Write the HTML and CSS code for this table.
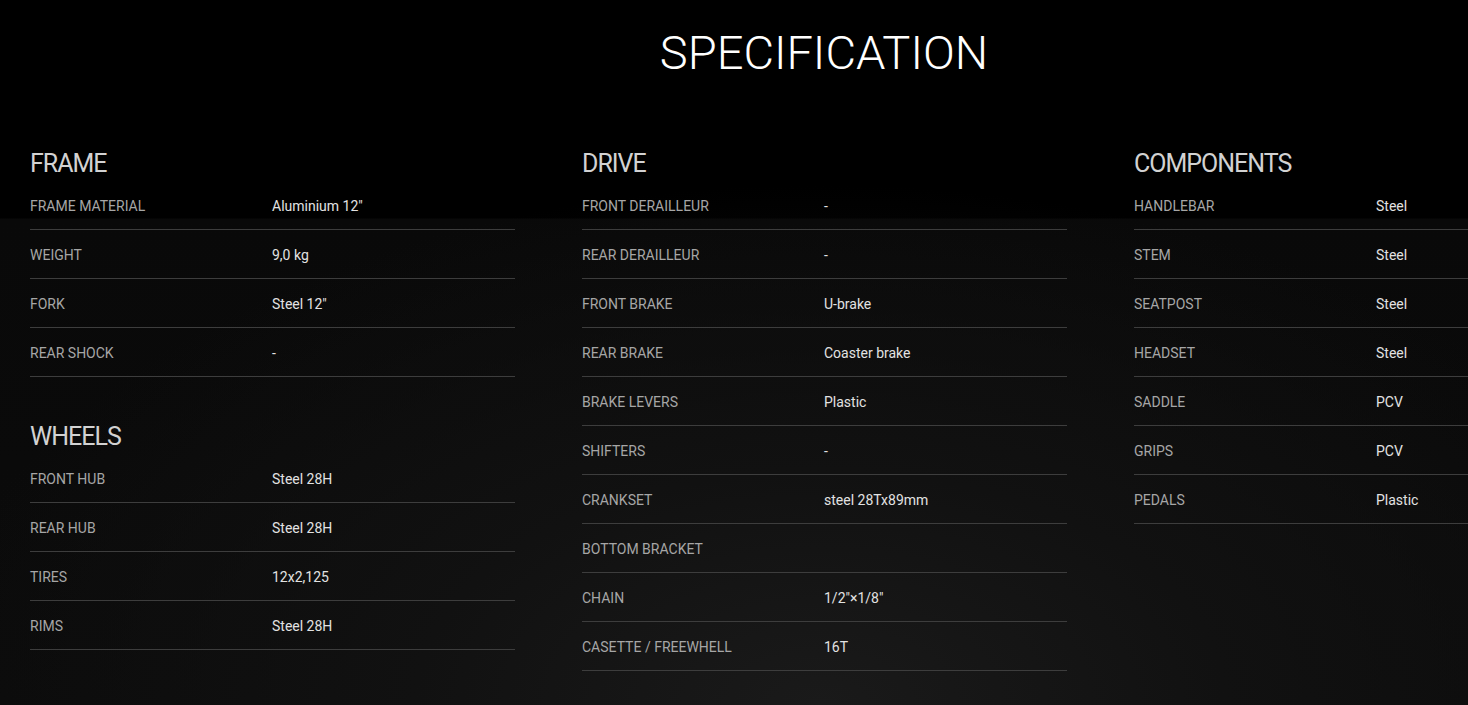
FILE: index.html
```html
<!DOCTYPE html>
<html lang="en">
<head>
<meta charset="utf-8">
<title>Specification</title>
<link rel="stylesheet" href="styles.css">
</head>
<body>
<main class="page">
  <h1 class="title">SPECIFICATION</h1>
  <div class="columns">
    <div class="col">
      <section class="group">
        <h2 class="group-title">FRAME</h2>
        <div class="row"><span class="label">FRAME MATERIAL</span><span class="value">Aluminium 12"</span></div>
        <div class="row"><span class="label">WEIGHT</span><span class="value">9,0 kg</span></div>
        <div class="row"><span class="label">FORK</span><span class="value">Steel 12"</span></div>
        <div class="row"><span class="label">REAR SHOCK</span><span class="value">-</span></div>
      </section>
      <section class="group">
        <h2 class="group-title">WHEELS</h2>
        <div class="row"><span class="label">FRONT HUB</span><span class="value">Steel 28H</span></div>
        <div class="row"><span class="label">REAR HUB</span><span class="value">Steel 28H</span></div>
        <div class="row"><span class="label">TIRES</span><span class="value">12x2,125</span></div>
        <div class="row"><span class="label">RIMS</span><span class="value">Steel 28H</span></div>
      </section>
    </div>
    <div class="col">
      <section class="group">
        <h2 class="group-title">DRIVE</h2>
        <div class="row"><span class="label">FRONT DERAILLEUR</span><span class="value">-</span></div>
        <div class="row"><span class="label">REAR DERAILLEUR</span><span class="value">-</span></div>
        <div class="row"><span class="label">FRONT BRAKE</span><span class="value">U-brake</span></div>
        <div class="row"><span class="label">REAR BRAKE</span><span class="value">Coaster brake</span></div>
        <div class="row"><span class="label">BRAKE LEVERS</span><span class="value">Plastic</span></div>
        <div class="row"><span class="label">SHIFTERS</span><span class="value">-</span></div>
        <div class="row"><span class="label">CRANKSET</span><span class="value">steel 28Tx89mm</span></div>
        <div class="row"><span class="label">BOTTOM BRACKET</span><span class="value"></span></div>
        <div class="row"><span class="label">CHAIN</span><span class="value">1/2"×1/8"</span></div>
        <div class="row"><span class="label">CASETTE / FREEWHELL</span><span class="value">16T</span></div>
      </section>
    </div>
    <div class="col">
      <section class="group">
        <h2 class="group-title">COMPONENTS</h2>
        <div class="row"><span class="label">HANDLEBAR</span><span class="value">Steel</span></div>
        <div class="row"><span class="label">STEM</span><span class="value">Steel</span></div>
        <div class="row"><span class="label">SEATPOST</span><span class="value">Steel</span></div>
        <div class="row"><span class="label">HEADSET</span><span class="value">Steel</span></div>
        <div class="row"><span class="label">SADDLE</span><span class="value">PCV</span></div>
        <div class="row"><span class="label">GRIPS</span><span class="value">PCV</span></div>
        <div class="row"><span class="label">PEDALS</span><span class="value">Plastic</span></div>
      </section>
    </div>
  </div>
</main>
</body>
</html>
```

FILE: styles.css
```css
html, body {
  margin: 0;
  padding: 0;
}
body {
  height: 705px;
  overflow: hidden;
  font-family: Roboto, "Noto Sans", "Liberation Sans", sans-serif;
  background-color: #000;
  background-image:
    radial-gradient(ellipse 900px 520px at 820px 705px, #1a1a1a 0%, #111 45%, rgba(10,10,10,0) 100%),
    linear-gradient(to bottom, #000 0, #000 218px, #090909 219px, #0b0b0b 705px);
  background-repeat: no-repeat;
}
.page {
  width: 1648px;
  box-sizing: border-box;
  padding: 26px 30px 0 30px;
}
.title {
  margin: 0;
  text-align: center;
  font-size: 47px;
  line-height: 54px;
  font-weight: 300;
  color: #fff;
}
.columns {
  display: grid;
  grid-template-columns: 485px 485px 485px;
  column-gap: 67px;
  margin-top: 69px;
}
.group + .group {
  margin-top: 45px;
}
.group-title {
  margin: 0 0 2px 0;
  font-size: 25px;
  line-height: 30px;
  font-weight: 400;
  letter-spacing: -1px;
  color: #d2d2d2;
}
.row {
  display: grid;
  grid-template-columns: 242px 1fr;
  padding: 15px 0 13px 0;
  line-height: 20px;
  font-size: 14px;
  border-bottom: 1px solid #3d3d3d;
}
.label {
  color: #a6a6a6;
}
.value {
  color: #e2e2e2;
}
```
